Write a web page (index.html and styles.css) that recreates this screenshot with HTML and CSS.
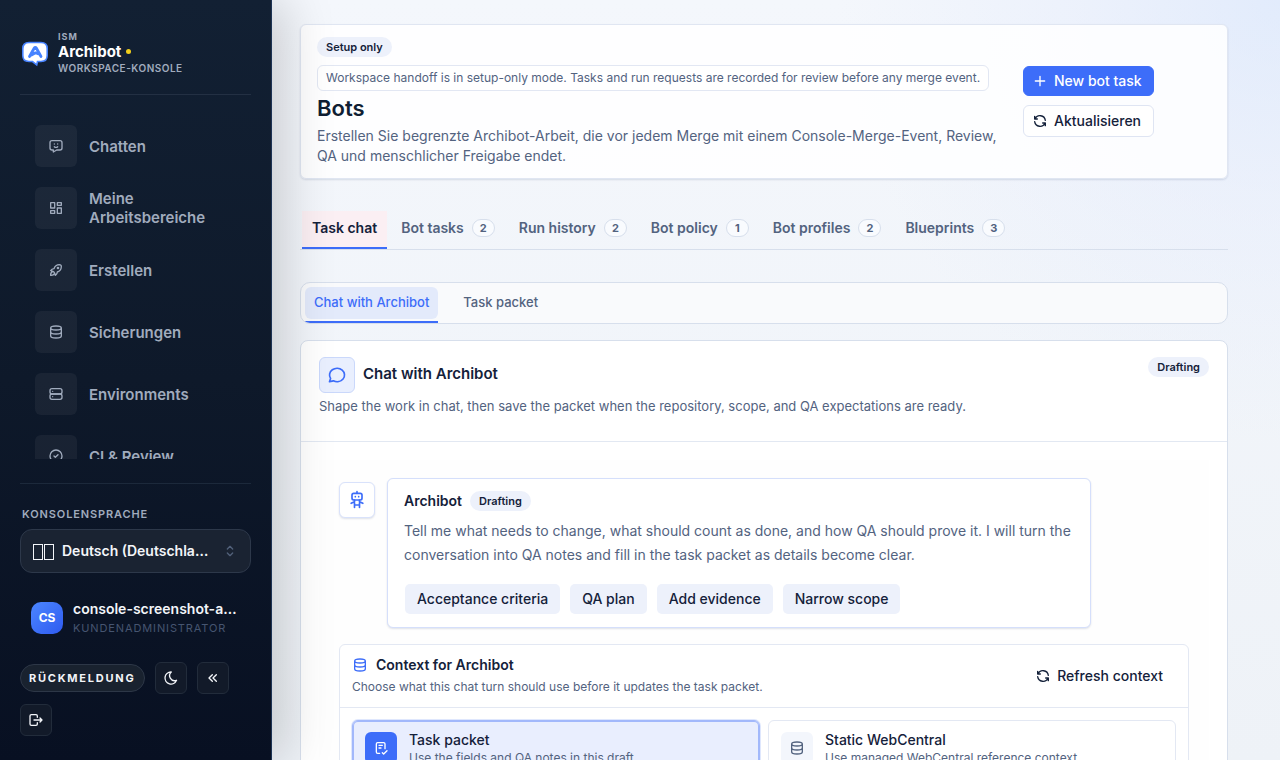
FILE: index.html
```html
<!DOCTYPE html>
<html lang="de">
<head>
<meta charset="utf-8">
<meta name="viewport" content="width=device-width, initial-scale=1">
<title>Archibot – Bots</title>
<link rel="stylesheet" href="styles.css">
</head>
<body>
<svg class="sprite" aria-hidden="true">
  <symbol id="chatbot" viewBox="0 0 24 24"><path d="M18 4a3 3 0 0 1 3 3v8a3 3 0 0 1-3 3h-5l-5 3v-3H6a3 3 0 0 1-3-3V7a3 3 0 0 1 3-3zM9.500 9h.01M14.500 9h.01M9.500 13a3.500 3.500 0 0 0 5 0"/></symbol>
  <symbol id="dashboard" viewBox="0 0 24 24"><path d="M4 4h6v8H4zM4 16h6v4H4zM14 12h6v8h-6zM14 4h6v4h-6z"/></symbol>
  <symbol id="rocket" viewBox="0 0 24 24"><path d="M4 13a8 8 0 0 1 7 7a6 6 0 0 0 3-5a9 9 0 0 0 6-8a3 3 0 0 0-3-3a9 9 0 0 0-8 6a6 6 0 0 0-5 3M7 14a6 6 0 0 0-3 6a6 6 0 0 0 6-3"/><circle cx="15" cy="9" r="1"/></symbol>
  <symbol id="database" viewBox="0 0 24 24"><path d="M4 6a8 3 0 1 0 16 0a8 3 0 1 0-16 0M4 6v6a8 3 0 0 0 16 0V6M4 12v6a8 3 0 0 0 16 0v-6"/></symbol>
  <symbol id="server" viewBox="0 0 24 24"><rect x="3" y="4" width="18" height="8" rx="3"/><rect x="3" y="12" width="18" height="8" rx="3"/><path d="M7 8v.01M7 16v.01"/></symbol>
  <symbol id="circle-check" viewBox="0 0 24 24"><circle cx="12" cy="12" r="9"/><path d="M9 12l2 2l4-4"/></symbol>
  <symbol id="selector" viewBox="0 0 24 24"><path d="M8 9l4-4l4 4M16 15l-4 4l-4-4"/></symbol>
  <symbol id="moon" viewBox="0 0 24 24"><path d="M12 3h.393a7.500 7.500 0 0 0 7.920 12.446A9 9 0 1 1 12 2.992z"/></symbol>
  <symbol id="collapse" viewBox="0 0 24 24"><path d="M11 7l-5 5l5 5M17 7l-5 5l5 5"/></symbol>
  <symbol id="logout" viewBox="0 0 24 24"><path d="M14 8V6a2 2 0 0 0-2-2H5a2 2 0 0 0-2 2v12a2 2 0 0 0 2 2h7a2 2 0 0 0 2-2v-2M9 12h12l-3-3M18 15l3-3"/></symbol>
  <symbol id="plus" viewBox="0 0 24 24"><path d="M12 5v14M5 12h14"/></symbol>
  <symbol id="refresh" viewBox="0 0 24 24"><path d="M20 11A8.100 8.100 0 0 0 4.500 9M4 5v4h4M4 13a8.100 8.100 0 0 0 15.500 2m.5 4v-4h-4"/></symbol>
  <symbol id="message" viewBox="0 0 24 24"><path d="M3 20l1.300-3.900C1.976 12.663 2.874 8.228 6.400 5.726c3.526-2.501 8.590-2.296 11.845.48c3.255 2.777 3.695 7.266 1.029 10.501c-2.666 3.235-7.615 4.215-11.574 2.293L3 20"/></symbol>
  <symbol id="robot" viewBox="0 0 24 24"><rect x="6" y="4" width="12" height="8" rx="2"/><path d="M12 2v2M9 12v9M15 12v9M5 16l4-2M15 14l4 2M9 18h6M10 8v.01M14 8v.01"/></symbol>
  <symbol id="task" viewBox="0 0 24 24"><path d="M10 20H7a2 2 0 0 1-2-2V6a2 2 0 0 1 2-2h9a2 2 0 0 1 2 2v7M9 8h5M9 12h3M14 19l2 2l5-5"/></symbol>
</svg>
<div class="app">
  <aside class="sidebar">
    <a class="brand" href="#">
      <svg class="brand-logo" viewBox="0 0 28 28" aria-hidden="true">
        <path d="M8 3.500h12c4 0 6.200 2.200 6.200 6v7c0 4-2.200 6-6.200 6h-3.500l-.8 3.300-4.200-3.300H8c-4 0-6.200-2-6.200-6v-7C1.800 5.700 4 3.500 8 3.500z" fill="#fff" stroke="#4783ff" stroke-width="1.600"/>
        <path d="M8.500 17.500L13.300 9c.5-.8 1.500-.8 2 0L20 17.500M10.500 16l4-2.200 2.500 1" fill="none" stroke="#4783ff" stroke-width="2.800" stroke-linecap="round" stroke-linejoin="round"/>
      </svg>
      <span class="brand-text">
        <span class="brand-over">ISM</span>
        <span class="brand-name">Archibot <i class="dot"></i></span>
        <span class="brand-sub">WORKSPACE-KONSOLE</span>
      </span>
    </a>
    <nav class="nav">
      <a href="#"><span class="tile"><svg class="icon"><use href="#chatbot"/></svg></span>Chatten</a>
      <a href="#"><span class="tile"><svg class="icon"><use href="#dashboard"/></svg></span>Meine Arbeitsbereiche</a>
      <a href="#"><span class="tile"><svg class="icon"><use href="#rocket"/></svg></span>Erstellen</a>
      <a href="#"><span class="tile"><svg class="icon"><use href="#database"/></svg></span>Sicherungen</a>
      <a href="#"><span class="tile"><svg class="icon"><use href="#server"/></svg></span>Environments</a>
      <a href="#"><span class="tile"><svg class="icon"><use href="#circle-check"/></svg></span>CI &amp; Review</a>
    </nav>
    <div class="side-foot">
      <label class="side-label" for="lang">KONSOLENSPRACHE</label>
      <div class="lang">
        <span class="flag" aria-hidden="true"><i></i><i></i></span>
        <select id="lang"><option>Deutsch (Deutschland)</option></select>
        <svg class="icon"><use href="#selector"/></svg>
      </div>
      <div class="user">
        <span class="avatar">CS</span>
        <span class="user-text">
          <span class="user-name">console-screenshot-admin</span>
          <span class="user-role">KUNDENADMINISTRATOR</span>
        </span>
      </div>
      <div class="side-actions">
        <button class="feedback" type="button">RÜCKMELDUNG</button>
        <button class="square" type="button" aria-label="Dunkelmodus"><svg class="icon"><use href="#moon"/></svg></button>
        <button class="square" type="button" aria-label="Einklappen"><svg class="icon"><use href="#collapse"/></svg></button>
        <button class="square" type="button" aria-label="Abmelden"><svg class="icon"><use href="#logout"/></svg></button>
      </div>
    </div>
  </aside>

  <main class="main">
    <header class="hero">
      <div class="hero-text">
        <span class="badge">Setup only</span>
        <p class="note">Workspace handoff is in setup-only mode. Tasks and run requests are recorded for review before any merge event.</p>
        <h1>Bots</h1>
        <p class="lead">Erstellen Sie begrenzte Archibot-Arbeit, die vor jedem Merge mit einem Console-Merge-Event, Review, QA und menschlicher Freigabe endet.</p>
      </div>
      <div class="hero-actions">
        <button class="btn primary" type="button"><svg class="icon"><use href="#plus"/></svg>New bot task</button>
        <button class="btn" type="button"><svg class="icon"><use href="#refresh"/></svg>Aktualisieren</button>
      </div>
    </header>

    <nav class="tabs">
      <a class="active" href="#">Task chat</a>
      <a href="#">Bot tasks <span class="count">2</span></a>
      <a href="#">Run history <span class="count">2</span></a>
      <a href="#">Bot policy <span class="count">1</span></a>
      <a href="#">Bot profiles <span class="count">2</span></a>
      <a href="#">Blueprints <span class="count">3</span></a>
    </nav>

    <div class="subtabs" role="tablist">
      <button class="active" type="button" role="tab" aria-selected="true"><span>Chat with Archibot</span></button>
      <button type="button" role="tab" aria-selected="false"><span>Task packet</span></button>
    </div>

    <section class="panel">
      <div class="panel-head">
        <div>
          <div class="panel-title"><span class="panel-icon"><svg class="icon"><use href="#message"/></svg></span><h2>Chat with Archibot</h2></div>
          <p>Shape the work in chat, then save the packet when the repository, scope, and QA expectations are ready.</p>
        </div>
        <span class="badge">Drafting</span>
      </div>
      <div class="panel-body">
        <div class="thread">
          <article class="message">
            <span class="bot"><svg class="icon"><use href="#robot"/></svg></span>
            <div class="bubble">
              <div class="bubble-head"><strong>Archibot</strong><span class="badge">Drafting</span></div>
              <p>Tell me what needs to change, what should count as done, and how QA should prove it. I will turn the conversation into QA notes and fill in the task packet as details become clear.</p>
              <div class="chips">
                <button type="button">Acceptance criteria</button>
                <button type="button">QA plan</button>
                <button type="button">Add evidence</button>
                <button type="button">Narrow scope</button>
              </div>
            </div>
          </article>
          <section class="context">
            <div class="context-head">
              <div>
                <h3><svg class="icon"><use href="#database"/></svg>Context for Archibot</h3>
                <p>Choose what this chat turn should use before it updates the task packet.</p>
              </div>
              <button class="ghost" type="button"><svg class="icon"><use href="#refresh"/></svg>Refresh context</button>
            </div>
            <div class="options">
              <button class="option selected" type="button">
                <span class="option-icon"><svg class="icon"><use href="#task"/></svg></span>
                <span class="option-text"><span class="option-title">Task packet</span><span class="option-desc">Use the fields and QA notes in this draft.</span></span>
              </button>
              <button class="option" type="button">
                <span class="option-icon"><svg class="icon"><use href="#database"/></svg></span>
                <span class="option-text"><span class="option-title">Static WebCentral</span><span class="option-desc">Use managed WebCentral reference context.</span></span>
              </button>
            </div>
          </section>
        </div>
      </div>
    </section>
  </main>
</div>
</body>
</html>
```
FILE: styles.css
```css
:root {
  --ink: #14213a;
  --muted: #53637f;
  --blue: #3d6df9;
  --line: #d7dfec;
  --soft: #edf1fb;
}
* { box-sizing: border-box; }
body {
  margin: 0;
  font-family: Inter, "Noto Sans", sans-serif;
  font-size: 14px;
  line-height: 20px;
  color: var(--ink);
}
h1, h2, h3, p { margin: 0; }
a { color: inherit; text-decoration: none; }
button, select { font: inherit; color: inherit; cursor: pointer; }
.sprite { display: none; }
.icon {
  width: 16px;
  height: 16px;
  flex: none;
  fill: none;
  stroke: currentColor;
  stroke-width: 2;
  stroke-linecap: round;
  stroke-linejoin: round;
}
.app { display: flex; height: 100vh; }

/* Sidebar */
.sidebar {
  position: relative;
  z-index: 1;
  flex: none;
  display: flex;
  flex-direction: column;
  width: 272px;
  padding: 30px 20px 24px;
  border-right: 1px solid #1d3354;
  background: linear-gradient(180deg, #122033 0%, #0e192a 50%, #081022 100%);
  box-shadow: 12px 0 48px rgba(0, 0, 0, 0.18);
  color: #a0abbd;
}
.brand {
  display: flex;
  align-items: center;
  gap: 9px;
  padding: 0 1px 18px;
  border-bottom: 1px solid #233043;
}
.brand-logo { width: 28px; height: 28px; }
.brand-text { display: flex; flex-direction: column; }
.brand-over { font-size: 9px; line-height: 13px; font-weight: 700; letter-spacing: 1px; }
.brand-name {
  display: flex;
  align-items: center;
  gap: 5px;
  font-size: 15px;
  line-height: 17px;
  font-weight: 700;
  color: #fff;
}
.dot { width: 5px; height: 5px; border-radius: 50%; background: #f2cf1b; }
.brand-sub { font-size: 10px; line-height: 16px; font-weight: 600; letter-spacing: 0.05em; }
.nav {
  flex: 1;
  min-height: 0;
  overflow: auto;
  scrollbar-width: none;
  display: flex;
  flex-direction: column;
  gap: 20px;
  margin: 24px 0;
  padding: 6px 15px 0;
}
.nav a {
  display: flex;
  flex: none;
  align-items: center;
  gap: 12px;
  font-size: 15px;
  line-height: 19px;
  font-weight: 600;
}
.tile {
  flex: none;
  display: grid;
  place-items: center;
  width: 42px;
  height: 42px;
  border-radius: 6px;
  background: rgba(255, 255, 255, 0.05);
}
.side-foot { border-top: 1px solid #1c293b; padding-top: 20px; }
.side-label {
  display: block;
  padding: 0 2px;
  margin-bottom: 5px;
  font-size: 11px;
  font-weight: 600;
  letter-spacing: 0.08em;
}
.lang {
  display: flex;
  align-items: center;
  gap: 8px;
  height: 44px;
  padding: 0 12px;
  border: 1px solid #2d384a;
  border-radius: 12px;
  background: #1a2332;
  color: #f3f5f9;
}
.lang select {
  flex: 1;
  min-width: 0;
  padding: 0;
  border: 0;
  appearance: none;
  background: transparent;
  font-size: 14px;
  font-weight: 600;
  text-overflow: ellipsis;
}
.lang option { color: var(--ink); }
.flag { display: flex; gap: 1px; padding-top: 2px; }
.flag i { width: 10px; height: 16px; border: 1px solid #f3f5f9; }
.lang .icon { color: #52617a; }
.user {
  display: flex;
  align-items: center;
  gap: 10px;
  margin: 26px 0 25px;
  padding: 0 11px;
}
.avatar {
  flex: none;
  display: grid;
  place-items: center;
  width: 32px;
  height: 32px;
  border-radius: 10px;
  background: linear-gradient(135deg, #4b86ff, #2f5bf0);
  color: #fff;
  font-size: 12px;
  font-weight: 700;
}
.user-text { display: flex; flex-direction: column; min-width: 0; }
.user-name {
  overflow: hidden;
  text-overflow: ellipsis;
  white-space: nowrap;
  color: #f3f5f9;
  font-weight: 600;
}
.user-role { font-size: 11px; line-height: 18px; letter-spacing: 0.08em; color: #465570; }
.side-actions { display: flex; flex-wrap: wrap; align-items: center; gap: 10px; }
.feedback, .square {
  border: 1px solid #2d3747;
  background: #19222f;
  color: #f3f5f9;
}
.feedback {
  height: 28px;
  padding: 0 9px 0 8px;
  border-radius: 14px;
  font-size: 11px;
  line-height: 16px;
  font-weight: 700;
  letter-spacing: 0.16em;
}
.square {
  display: grid;
  place-items: center;
  width: 32px;
  height: 32px;
  padding: 0;
  border-color: #222c3b;
  border-radius: 6px;
  background: #121a29;
}

/* Content */
.main {
  flex: 1;
  min-width: 0;
  overflow: auto;
  scrollbar-width: none;
  padding: 24px 52px 24px 28px;
  background:
    radial-gradient(circle at 100% 0, rgba(208, 224, 252, 0.5), rgba(225, 233, 252, 0.4) 200px, transparent 440px),
    linear-gradient(180deg, #f4f7fc, #eef2f7);
}
.badge {
  display: inline-block;
  padding: 0 9px;
  border-radius: 10px;
  background: var(--soft);
  font-size: 11px;
  line-height: 20px;
  font-weight: 600;
}
.hero {
  display: grid;
  grid-template-columns: 1fr 188px;
  gap: 16px;
  align-items: center;
  padding: 12px 16px;
  border: 1px solid #e0e6f2;
  border-radius: 6px;
  background: rgba(255, 255, 255, 0.85);
  box-shadow: 0 1px 2px rgba(30, 50, 100, 0.14);
}
.hero-text { display: flex; flex-direction: column; align-items: flex-start; }
.note {
  margin-top: 8px;
  padding: 3px 8px;
  border: 1px solid #e2e7f3;
  border-radius: 6px;
  background: #fff;
  font-size: 12px;
  line-height: 18px;
  color: var(--muted);
}
h1 { margin: 4px 0 5px; font-size: 22px; line-height: 26px; font-weight: 600; color: #101e33; }
.lead { color: var(--muted); }
.hero-actions { display: flex; flex-direction: column; align-items: flex-start; gap: 9px; }
.btn {
  display: flex;
  align-items: center;
  gap: 6px;
  width: 131px;
  height: 32px;
  padding: 0 8px;
  border: 1px solid #dfe5f3;
  border-radius: 6px;
  background: #fff;
  font-weight: 500;
  white-space: nowrap;
}
.primary { height: 30px; border-color: var(--blue); background: var(--blue); color: #fff; }
.tabs {
  display: flex;
  gap: 4px;
  margin-top: 32px;
  padding: 0 2px;
  border-bottom: 1px solid var(--line);
}
.tabs a {
  display: flex;
  align-items: center;
  gap: 8px;
  height: 38px;
  padding: 0 10px 2px;
  border-bottom: 2px solid transparent;
  font-weight: 600;
  color: var(--muted);
}
.tabs .active { border-color: var(--blue); background: #fbeff3; color: var(--ink); }
.count {
  min-width: 23px;
  padding: 0 7px;
  border: 1px solid var(--line);
  border-radius: 9px;
  background: #f9fbfe;
  font-size: 11px;
  line-height: 16px;
  font-weight: 700;
  text-align: center;
}
.subtabs {
  display: flex;
  gap: 16px;
  overflow: hidden;
  margin: 32px 0 16px;
  padding: 4px 4px 0;
  border: 1px solid var(--line);
  border-radius: 10px;
  background: #f9fafc;
}
.subtabs button {
  padding: 0 0 2px;
  border: 0;
  border-bottom: 2px solid transparent;
  background: none;
  font-size: 13px;
  font-weight: 500;
  color: var(--muted);
}
.subtabs span { display: block; padding: 5px 9px 7px; border-radius: 6px; }
.subtabs .active { border-color: var(--blue); color: var(--blue); }
.subtabs .active span { background: #e3eafb; }
.panel {
  border: 1px solid var(--line);
  border-radius: 8px;
  background: #fff;
}
.panel-head {
  display: flex;
  justify-content: space-between;
  align-items: flex-start;
  gap: 16px;
  padding: 16px 18px 25px;
  border-bottom: 1px solid #e2e8f2;
}
.panel-head p { margin-top: 3px; font-size: 13px; color: var(--muted); }
.panel-title { display: flex; align-items: center; gap: 8px; }
h2 { padding-bottom: 3px; font-size: 15px; line-height: 20px; font-weight: 600; }
.panel-icon {
  display: grid;
  place-items: center;
  width: 36px;
  height: 36px;
  border: 1px solid #cad8fb;
  border-radius: 6px;
  background: #e9effe;
  color: var(--blue);
}
.panel-icon .icon, .bot .icon { width: 20px; height: 20px; }
.panel-body { padding: 18px; }
.thread { padding: 18px 20px; background: #fefefe; }
.message { display: flex; align-items: flex-start; gap: 12px; }
.bot {
  flex: none;
  display: grid;
  place-items: center;
  width: 36px;
  height: 36px;
  margin-top: 4px;
  border: 1px solid #d9e2fb;
  border-radius: 6px;
  background: #fff;
  box-shadow: 0 1px 2px rgba(30, 50, 100, 0.14);
  color: var(--blue);
}
.bubble {
  max-width: 704px;
  padding: 12px 16px 13px;
  border: 1px solid #d5dffb;
  border-radius: 6px;
  background: #fff;
  box-shadow: 0 1px 2px rgba(30, 50, 100, 0.14);
}
.bubble-head { display: flex; align-items: center; gap: 8px; }
.bubble-head strong { font-weight: 600; }
.bubble p { margin: 8px 0 17px; line-height: 24px; color: var(--muted); }
.chips { display: flex; flex-wrap: wrap; gap: 10px; padding-left: 1px; }
.chips button {
  height: 30px;
  padding: 0 12px;
  border: 0;
  border-radius: 5px;
  background: var(--soft);
  font-weight: 500;
}
.context {
  margin-top: 16px;
  border: 1px solid #e3e8f3;
  border-radius: 6px;
  background: #fff;
}
.context-head {
  display: flex;
  justify-content: space-between;
  align-items: center;
  padding: 10px 12px 11px;
  border-bottom: 1px solid #e3e8f3;
}
h3 { display: flex; align-items: center; gap: 8px; font-size: 14px; line-height: 20px; font-weight: 600; }
h3 .icon { color: var(--blue); }
.context-head p { margin-top: 3px; font-size: 12px; line-height: 18px; color: var(--muted); }
.ghost {
  display: flex;
  align-items: center;
  gap: 6px;
  padding: 5px 13px;
  border: 0;
  background: none;
  font-weight: 500;
}
.options { display: grid; grid-template-columns: 1fr 1fr; gap: 8px; padding: 12px; }
.option {
  display: flex;
  align-items: flex-start;
  gap: 12px;
  padding: 11px 12px;
  border: 1px solid #e3e8f3;
  border-radius: 6px;
  background: #fff;
  text-align: left;
}
.selected {
  border-color: #a2b8fb;
  background: #e9eefe;
  box-shadow: inset 0 0 0 1px #a2b8fb, 0 0 0 1px #dfe7fd;
}
.option-icon {
  flex: none;
  display: grid;
  place-items: center;
  width: 32px;
  height: 32px;
  border-radius: 6px;
  background: #f3f6fc;
  color: var(--muted);
}
.selected .option-icon { background: var(--blue); color: #fff; }
.option-text { display: flex; flex-direction: column; }
.option-title { line-height: 16px; font-weight: 500; }
.option-desc { font-size: 12px; line-height: 20px; color: var(--muted); }
```
